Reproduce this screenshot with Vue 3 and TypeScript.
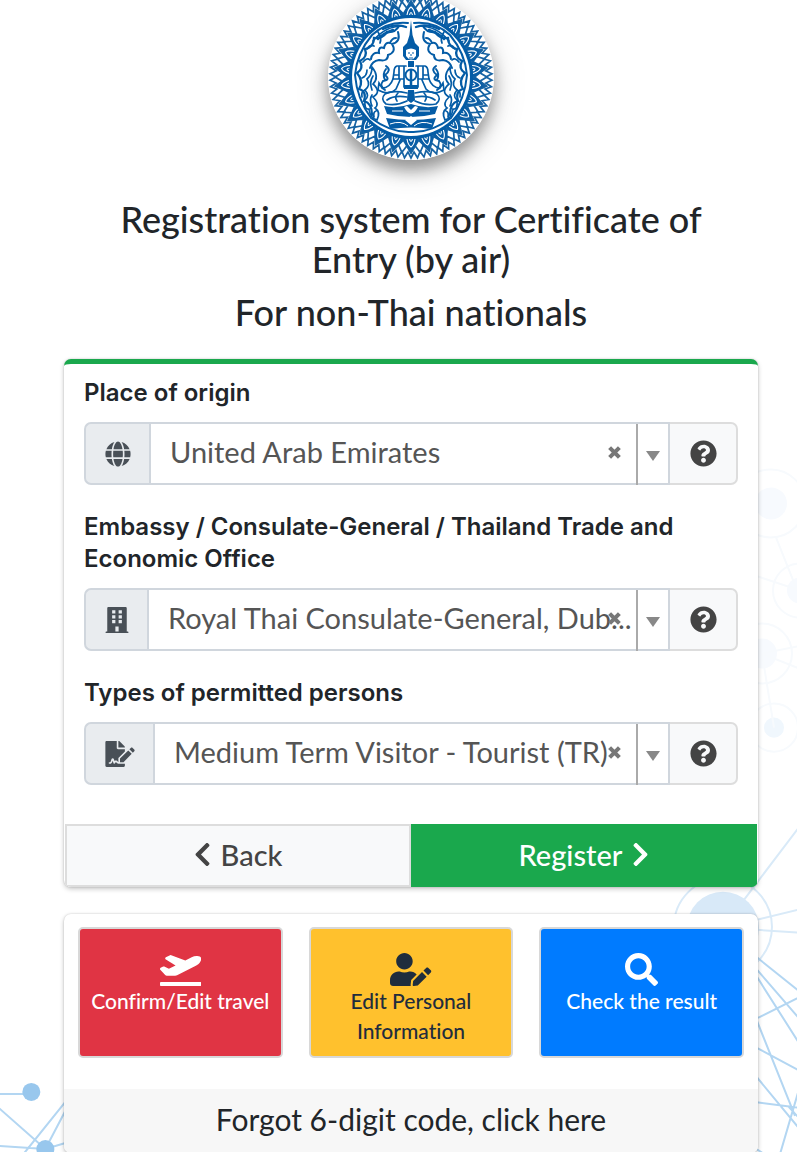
<script setup lang="ts">
import { reactive } from 'vue'

interface Field {
  id: string
  label: string
  icon: string
  viewBox: string
  width: number
  value: string
  options: string[]
}

const icons = {
  globe: 'M336.5 160C322 70.7 287.8 8 248 8s-74 62.7-88.5 152h177zM152 256c0 22.2 1.2 43.5 3.3 64h185.3c2.1-20.5 3.3-41.8 3.3-64s-1.2-43.5-3.3-64H155.3c-2.1 20.5-3.3 41.8-3.3 64zm324.7-96c-28.6-67.9-86.5-120.4-158-141.6 24.4 33.8 41.2 84.7 50 141.6h108zM177.2 18.4C105.8 39.6 47.8 92.1 19.3 160h108c8.7-56.9 25.5-107.8 49.9-141.6zM487.4 192H372.7c2.1 21 3.3 42.5 3.3 64s-1.2 43-3.3 64h114.6c5.5-20.5 8.6-41.8 8.6-64s-3.1-43.5-8.5-64zM120 256c0-21.5 1.2-43 3.3-64H8.6C3.2 212.5 0 233.8 0 256s3.2 43.5 8.6 64h114.6c-2-21-3.2-42.5-3.2-64zm39.5 96c14.5 89.3 48.7 152 88.5 152s74-62.7 88.5-152h-177zm159.3 141.6c71.4-21.2 129.4-73.7 158-141.6h-108c-8.8 56.9-25.6 107.8-50 141.6zM19.3 352c28.6 67.9 86.5 120.4 158 141.6-24.4-33.8-41.2-84.7-50-141.6h-108z',
  building: 'M436 480h-20V24c0-13-11-24-24-24H56C43 0 32 11 32 24v456H12c-7 0-12 5-12 12v20h448v-20c0-7-5-12-12-12zM128 64h64v64h-64zM128 160h64v64h-64zM128 256h64v64h-64zM256 64h64v64h-64zM256 160h64v64h-64zM256 256h64v64h-64zM192 384h64v96h-64z',
  signature: 'M218.17 424.14c-2.95-5.92-8.09-6.52-10.17-6.52s-7.22.59-10.02 6.19l-7.67 15.34c-6.37 12.78-25.03 11.37-29.48-2.09L144 386.59l-10.61 31.88c-5.89 17.66-22.38 29.53-41 29.53H80c-8.84 0-16-7.16-16-16s7.16-16 16-16h12.39c4.83 0 9.11-3.08 10.64-7.66l18.19-54.64c3.3-9.81 12.44-16.41 22.78-16.41s19.48 6.59 22.77 16.41l13.88 41.64c19.75-16.19 54.06-9.7 66 14.16 1.89 3.78 5.49 5.95 9.36 6.26v-82.12l128-127.09V160H248c-13.2 0-24-10.8-24-24V0H24C10.7 0 0 10.7 0 24v464c0 13.3 10.7 24 24 24h336c13.3 0 24-10.7 24-24v-40l-128-.11c-16.12-.31-30.58-9.28-37.83-23.75zM384 121.9c0-6.3-2.5-12.4-7-16.9L279.1 7c-4.5-4.5-10.6-7-17-7H256v128h128v-6.1zm-96 225.06V416h68.99l161.68-162.78-67.88-67.88L288 346.96zm280.54-179.63l-31.87-31.87c-9.94-9.94-26.07-9.94-36.01 0l-27.25 27.25 67.88 67.88 27.25-27.25c9.95-9.94 9.95-26.07 0-36.01z',
  question: 'M504 256c0 136.997-111.043 248-248 248S8 392.997 8 256C8 119.083 119.043 8 256 8s248 111.083 248 248zM262.655 90c-54.497 0-89.255 22.957-116.549 63.758-3.536 5.286-2.353 12.415 2.715 16.258l34.699 26.31c5.205 3.947 12.621 3.008 16.665-2.122 17.864-22.658 30.113-35.797 57.303-35.797 20.429 0 45.698 13.148 45.698 32.958 0 14.976-12.363 22.667-32.534 33.976C247.128 238.528 216 254.941 216 296v4c0 6.627 5.373 12 12 12h56c6.627 0 12-5.373 12-12v-1.333c0-28.462 83.186-29.647 83.186-106.667 0-58.002-60.165-102-116.531-102zM256 338c-25.365 0-46 20.635-46 46 0 25.364 20.635 46 46 46s46-20.636 46-46c0-25.365-20.635-46-46-46z',
  left: 'M34.52 239.03L228.87 44.69c9.37-9.37 24.57-9.37 33.94 0l22.67 22.67c9.36 9.36 9.37 24.52.04 33.9L131.49 256l154.02 154.75c9.34 9.38 9.32 24.54-.04 33.9l-22.67 22.67c-9.37 9.37-24.57 9.37-33.94 0L34.52 272.97c-9.37-9.37-9.37-24.57 0-33.94z',
  right: 'M285.476 272.971L91.132 467.314c-9.373 9.373-24.569 9.373-33.941 0l-22.667-22.667c-9.357-9.357-9.375-24.522-.04-33.901L188.505 256 34.484 101.255c-9.335-9.379-9.317-24.544.04-33.901l22.667-22.667c9.373-9.373 24.569-9.373 33.941 0L285.475 239.03c9.373 9.372 9.373 24.568.001 33.941z',
  plane: 'M624 448H16c-8.84 0-16 7.16-16 16v32c0 8.84 7.16 16 16 16h608c8.84 0 16-7.16 16-16v-32c0-8.84-7.16-16-16-16zM80.55 341.27c6.28 6.84 15.1 10.72 24.33 10.71l130.54-.18a65.62 65.62 0 0 0 29.64-7.12l290.96-147.65c26.74-13.57 50.71-32.94 67.02-58.31 18.31-28.48 20.3-49.09 13.07-63.65-7.21-14.57-24.74-25.27-58.25-27.45-29.85-1.94-59.54 5.92-86.28 19.48l-98.51 49.99-218.7-82.06a17.799 17.799 0 0 0-18-1.11L90.62 67.29c-10.67 5.41-13.25 19.65-5.17 28.53l156.22 98.1-103.21 52.38-72.35-36.47a17.804 17.804 0 0 0-16.07.02L9.91 230.22c-10.44 5.3-13.19 19.12-5.57 28.08l76.21 82.97z',
  userEdit: 'M224 256c70.7 0 128-57.3 128-128S294.7 0 224 0 96 57.3 96 128s57.3 128 128 128zm89.6 32h-16.7c-22.2 10.2-46.9 16-72.9 16s-50.6-5.8-72.9-16h-16.7C60.2 288 0 348.2 0 422.4V464c0 26.5 21.5 48 48 48h274.9c-2.4-6.8-3.4-14-2.6-21.3l6.8-60.9 1.2-11.1 7.9-7.9 77.3-77.3c-24.5-27.7-60-45.5-99.9-45.5zm45.3 145.3l-6.8 61c-1.1 10.2 7.5 18.8 17.6 17.6l60.9-6.8 137.9-137.9-71.7-71.7-137.9 137.8zM633 268.9L595.1 231c-9.3-9.3-24.5-9.3-33.8 0l-37.8 37.8-4.1 4.1 71.8 71.7 41.8-41.8c9.3-9.4 9.3-24.5 0-33.9z',
  search: 'M505 442.7L405.3 343c-4.5-4.5-10.6-7-17-7H372c27.6-35.3 44-79.7 44-128C416 93.1 322.9 0 208 0S0 93.1 0 208s93.1 208 208 208c48.3 0 92.7-16.4 128-44v16.3c0 6.4 2.5 12.5 7 17l99.7 99.7c9.4 9.4 24.6 9.4 33.9 0l28.3-28.3c9.4-9.4 9.4-24.6.1-34zM208 336c-70.7 0-128-57.2-128-128 0-70.7 57.2-128 128-128 70.7 0 128 57.2 128 128 0 70.7-57.2 128-128 128z',
}

const fields = reactive<Field[]>([
  { id: 'origin', label: 'Place of origin', icon: icons.globe, viewBox: '0 0 496 512', width: 26, value: 'United Arab Emirates', options: ['United Arab Emirates'] },
  { id: 'embassy', label: 'Embassy / Consulate-General / Thailand Trade and Economic Office', icon: icons.building, viewBox: '0 0 448 512', width: 24, value: 'Royal Thai Consulate-General, Dub...', options: ['Royal Thai Consulate-General, Dub...'] },
  { id: 'person', label: 'Types of permitted persons', icon: icons.signature, viewBox: '0 0 576 512', width: 30, value: 'Medium Term Visitor - Tourist (TR)', options: ['Medium Term Visitor - Tourist (TR)'] },
])

const tiles = [
  { label: 'Confirm/Edit travel', tone: 'red', icon: icons.plane, viewBox: '0 0 640 512' },
  { label: 'Edit Personal Information', tone: 'yellow', icon: icons.userEdit, viewBox: '0 0 640 512' },
  { label: 'Check the result', tone: 'blue', icon: icons.search, viewBox: '0 0 512 512' },
]

// Closed zigzag ring with the given number of teeth.
function zigzag(count: number, inner: number, outer: number): string {
  const points: string[] = []
  for (let i = 0; i < count * 2; i++) {
    const a = (i * Math.PI) / count
    const r = i % 2 ? inner : outer
    points.push(`${(r * Math.sin(a)).toFixed(2)},${(-r * Math.cos(a)).toFixed(2)}`)
  }
  return points.join(' ')
}

const teeth = zigzag(78, 75, 81)
const diamondsOuter = zigzag(52, 69, 76)
const diamondsInner = zigzag(26, 63, 75)
const petals = Array.from({ length: 26 }, (_, i) => (i * 360) / 26)
const sides = [1, -1]
</script>

<template>
  <div class="page">
    <svg class="network" viewBox="0 0 797 1152" preserveAspectRatio="xMaxYMax slice" aria-hidden="true">
      <g class="faint">
        <circle cx="771" cy="503" r="16" class="dot" />
        <circle cx="771" cy="503" r="34" />
        <circle cx="800" cy="590" r="13" class="dot" />
        <circle cx="800" cy="590" r="27" />
        <circle cx="762" cy="653" r="15" class="dot" />
        <circle cx="762" cy="653" r="30" />
        <circle cx="774" cy="727" r="10" class="dot deeper" />
        <circle cx="774" cy="727" r="24" />
        <path d="M776 537l24 60M762 653l12 74M762 653l40-8M762 653l45 18M740 570l60 20" />
      </g>
      <g class="light">
        <circle cx="723" cy="927" r="36" class="dot" />
        <circle cx="723" cy="926" r="49" />
        <path d="M744 899l60-79M757 919l45-11M757 929l45 3" />
      </g>
      <g class="strong">
        <path d="M755 955l45 36M752 963l50 58M750 965l54 85M758 1017l44-22M757 1020l38 95M755 1046l45 24M755 1074l47 57M755 1101l45 6M800 1085l-22 75M752 1145l30 20M788 1105l20 22" />
        <path d="M0 1093h30M-5 1103l51 45M25 1152l45-56M46 1148l22-42M0 1145l46 3 20-6" />
        <circle cx="32" cy="1091" r="9" class="dot" />
        <circle cx="46" cy="1148" r="9" class="dot" />
      </g>
    </svg>

    <main class="content">
      <header class="header">
        <svg class="emblem" viewBox="-83 -83 166 166" role="img" aria-label="Ministry emblem">
          <circle r="83" fill="#fff" />
          <g fill="none" stroke="#1763a3" stroke-width="1.7">
            <polygon :points="teeth" />
            <polygon :points="diamondsOuter" />
            <polygon :points="diamondsInner" stroke-width="2.4" />
          </g>
          <g v-for="angle in petals" :key="angle" :transform="`rotate(${angle})`">
            <path d="M-7-60C-8-67-3-69 0-74C3-69 8-67 7-60Z" fill="#0a5ea6" />
            <path d="M-4-62Q-3-68 0-70Q3-68 4-62M-1.5-62Q0-67 1.5-62" fill="none" stroke="#fff" stroke-width="1.1" />
          </g>
          <circle r="62" fill="#045ca6" />
          <circle r="59" fill="#fff" />
          <g v-for="side in sides" :key="side" :transform="`scale(${side} 1)`" fill="none" stroke="#045ca6" stroke-width="1.7" stroke-linecap="round">
            <path d="M3-54Q24-56 39-42Q54-24 56-2Q54 22 40 41Q20 56 0 55" stroke-width="2" />
            <path d="M8-51Q26-51 38-36" />
            <path d="M12-51Q16-44 24-45Q29-38 37-39Q37-30 46-28Q43-20 51-16Q47-8 54-4Q47 4 52 12Q44 14 47 24Q39 26 39 38" stroke-width="2.3" />
            <path d="M13-45Q10-35 19-33Q14-25 23-22Q23-15 32-17Q39-16 41-9M15-39Q19-39 21-34Q26-35 27-29Q33-31 32-24Q39-25 40-18" stroke-width="2" />
            <path d="M39-10Q31 0 38 7Q29 15 38 20Q31 27 36 31Q30 35 34 43Q41 41 42 32Q47 33 46 23Q41 19 46 13Q40 8 44 2Q39-2 39-10M38-1Q42 5 39 13M39 18Q42 22 39 29M35 34Q38 35 37 40" />
            <path d="M33-45Q29-39 31-34M44-28Q41-33 37-31M48-15Q44-20 41-17M49 1Q44-1 44-7M46 13Q50 14 49 20" />
            <path d="M5-50Q15-54 28-48M18-47Q29-43 33-38" stroke-width="2.4" />
            <path d="M25-11Q19-7 26-2Q20 3 28 4Q32 9 26 13M25-8Q29-3 26 3" stroke-width="2" />
            <path d="M5-11H14Q17-10 17-5L18 2Q21 11 29 11L32 6L33 13Q22 19 15 12L11 3M7-11V10M12-10V2M17 2H8M17-2H12" />
            <path d="M4 16Q19 13 26 17Q31 22 25 27Q14 29 4 24M4 20Q17 18 24 23M13 16Q17 20 14 24" />
          </g>
          <g fill="#045ca6">
            <path d="M-1.5-42L0-57L1.5-42L4-34L8-30V-21L5-17H-5L-8-21V-30L-4-34Z" />
            <path d="M-5-27Q0-30 5-27V-21Q0-14-5-21Z" fill="#fff" />
            <path d="M-3-24H-1M1-24H3M0-23V-21M-2-19H2" stroke="#045ca6" stroke-width="1" />
            <path d="M-3-16H3V-10H-3ZM-7 8H7V12H-7ZM-3 13H3L4 23L0 26L-4 23Z" />
            <circle r="5.5" cy="-2" fill="none" stroke="#045ca6" stroke-width="2" />
            <path d="M0-8V9" stroke="#045ca6" stroke-width="2.5" />
            <path d="M-27 29Q-14 32 0 27Q14 32 27 29L24 37Q0 43-24 37ZM-25 41Q0 45 25 41L21 52Q0 49-21 52Z" />
            <path d="M-7 30Q0 43 7 30L4 29L0 33L-4 29ZM-6 43L0 48L6 43L0 39Z" fill="#fff" />
            <path d="M-21 47Q-10 43-3 49M21 47Q10 43 3 49M-19 34H-8M8 34H19" fill="none" stroke="#fff" stroke-width="1" />
          </g>
        </svg>
        <h1 class="title">Registration system for Certificate of Entry (by air)</h1>
        <h2 class="title">For non-Thai nationals</h2>
      </header>

      <form class="card form-card" @submit.prevent>
        <div class="fields">
          <div v-for="field in fields" :key="field.id" class="field">
            <label class="label" :for="field.id">{{ field.label }}</label>
            <div class="group">
              <span class="addon">
                <svg :viewBox="field.viewBox" :width="field.width" height="26" fill="currentColor" fill-rule="evenodd" aria-hidden="true"><path :d="field.icon" /></svg>
              </span>
              <div class="picker">
                <select :id="field.id" v-model="field.value" class="select">
                  <option v-for="option in field.options" :key="option" :value="option">{{ option }}</option>
                </select>
                <button type="button" class="clear" aria-label="Clear" @click="field.value = ''">
                  <svg viewBox="0 0 12 12" width="13" height="13" aria-hidden="true"><path d="M1.5 1.5l9 9M10.5 1.5l-9 9" stroke="currentColor" stroke-width="3.8" /></svg>
                </button>
                <span class="caret" aria-hidden="true"></span>
              </div>
              <button type="button" class="help" aria-label="Help">
                <svg viewBox="0 0 512 512" width="27" height="27" fill="currentColor" aria-hidden="true"><path :d="icons.question" /></svg>
              </button>
            </div>
          </div>
        </div>
        <div class="actions">
          <button type="button" class="action back">
            <svg viewBox="0 0 320 512" width="17" height="27" fill="currentColor" aria-hidden="true"><path :d="icons.left" /></svg>
            <span>Back</span>
          </button>
          <button type="submit" class="action register">
            <span>Register</span>
            <svg viewBox="0 0 320 512" width="17" height="27" fill="currentColor" aria-hidden="true"><path :d="icons.right" /></svg>
          </button>
        </div>
      </form>

      <section class="card">
        <div class="tiles">
          <button v-for="tile in tiles" :key="tile.label" type="button" class="tile" :class="tile.tone">
            <svg :viewBox="tile.viewBox" height="33" fill="currentColor" aria-hidden="true"><path :d="tile.icon" /></svg>
            <span>{{ tile.label }}</span>
          </button>
        </div>
        <a class="forgot" href="#">Forgot 6-digit code, click here</a>
      </section>
    </main>
  </div>
</template>

<style>
body {
  background: #fff;
}
</style>

<style scoped>
.page {
  position: relative;
  box-sizing: border-box;
  min-height: 100vh;
  padding: 0 39px 0 64px;
  overflow: hidden;
  color: #212529;
  font-family: Lato, "Noto Sans", sans-serif;
  font-variant-ligatures: none;
}
.page *,
.page *::before {
  box-sizing: border-box;
}
button,
select {
  margin: 0;
  font-family: inherit;
  font-variant-ligatures: none;
}
.network {
  position: absolute;
  inset: 0;
  width: 100%;
  height: 100%;
  fill: none;
  stroke-width: 2;
}
.faint {
  stroke: #f7fafd;
}
.faint .dot {
  fill: #f7fafe;
  stroke: none;
}
.faint .deeper {
  fill: #f0f7fd;
}
.light {
  stroke: #d9eaf8;
}
.light .dot {
  fill: #d8e9f8;
  stroke: none;
}
.strong {
  stroke: #b3d6f2;
}
.strong .dot {
  fill: #98c7ed;
  stroke: none;
}
.content {
  position: relative;
  display: flex;
  flex-direction: column;
}
.header {
  display: flex;
  flex-direction: column;
  align-items: center;
  margin-top: -6px;
  margin-bottom: 27px;
  text-align: center;
}
.emblem {
  width: 166px;
  height: 166px;
  margin-bottom: 39px;
  border-radius: 50%;
  box-shadow: 0 10px 16px rgba(0, 0, 0, 0.36), 0 8px 36px rgba(0, 0, 0, 0.14);
}
.title {
  margin: 0;
  padding: 0 32px;
  font-size: 36px;
  font-weight: 500;
  line-height: 40px;
}
h2.title {
  margin-top: 13px;
}
.card {
  overflow: hidden;
  background: #fff;
  border-radius: 7px;
  box-shadow: 0 0 2px rgba(0, 0, 0, 0.18), 0 2px 5px rgba(0, 0, 0, 0.22);
}
.form-card {
  margin-bottom: 27px;
  border-top: 5px solid #1aa84d;
}
.fields {
  display: flex;
  flex-direction: column;
  gap: 26px;
  padding: 13px 20px 39px;
}
.label {
  display: block;
  margin-bottom: 13px;
  font-family: Inter, sans-serif;
  font-size: 24px;
  font-weight: 600;
  line-height: 32px;
}
.group {
  display: flex;
  height: 63px;
}
.addon {
  display: flex;
  align-items: center;
  padding: 0 18px 0 19px;
  color: #495057;
  background: #e9ecef;
  border: 2px solid #d0d6dd;
  border-right: 0;
  border-radius: 7px 0 0 7px;
}
.picker {
  position: relative;
  display: flex;
  flex: 1;
  min-width: 0;
}
.select {
  width: 100%;
  height: 100%;
  padding: 0 34px 5px 19px;
  overflow: hidden;
  color: #555;
  font-size: 29px;
  text-overflow: ellipsis;
  white-space: nowrap;
  appearance: none;
  background: #fff;
  border: 2px solid #d0d6dd;
  border-radius: 0;
}
.clear {
  position: absolute;
  top: 22px;
  right: 49px;
  display: flex;
  padding: 2px 0;
  color: #777;
  background: none;
  border: 0;
}
.caret {
  position: absolute;
  top: 2px;
  right: 2px;
  bottom: 0;
  display: flex;
  align-items: center;
  justify-content: center;
  width: 32px;
  border-left: 2px solid #aaa;
}
.caret::before {
  width: 0;
  margin-top: 3px;
  border: 7px solid transparent;
  border-top: 10px solid #888;
  border-bottom: 0;
  content: "";
}
.help {
  display: flex;
  align-items: center;
  justify-content: center;
  width: 68px;
  padding: 0;
  color: #444;
  background: #f8f9fa;
  border: 2px solid #ddd;
  border-left: 0;
  border-radius: 0 7px 7px 0;
}
.actions {
  display: flex;
  padding: 0 1px;
}
.action {
  display: flex;
  flex: 1;
  gap: 10px;
  align-items: center;
  justify-content: center;
  height: 63px;
  padding: 0 0 3px;
  font-size: 29px;
  font-weight: 500;
  border: 2px solid #ddd;
}
.back {
  color: #444;
  background: #f8f9fa;
}
.register {
  color: #fff;
  background: #1aa84d;
  border-color: #1aa84d;
}
.tiles {
  display: grid;
  grid-template-columns: repeat(3, 1fr);
  gap: 26px;
  padding: 13px 14px 31px;
}
.tile {
  display: flex;
  flex-direction: column;
  align-items: center;
  min-height: 131px;
  padding: 24px 7px 10px;
  font-size: 21px;
  font-weight: 500;
  line-height: 30px;
  border: 2px solid #d8d8d8;
  border-radius: 5px;
}
.red {
  color: #fff;
  background: #e03444;
}
.yellow {
  color: #1f2d3d;
  background: #ffc12d;
}
.blue {
  color: #fff;
  background: #007bff;
}
.forgot {
  display: block;
  padding: 10px 16px 14px;
  color: #212529;
  font-size: 30px;
  line-height: 40px;
  text-align: center;
  text-decoration: none;
  background: #f7f7f7;
}
</style>
